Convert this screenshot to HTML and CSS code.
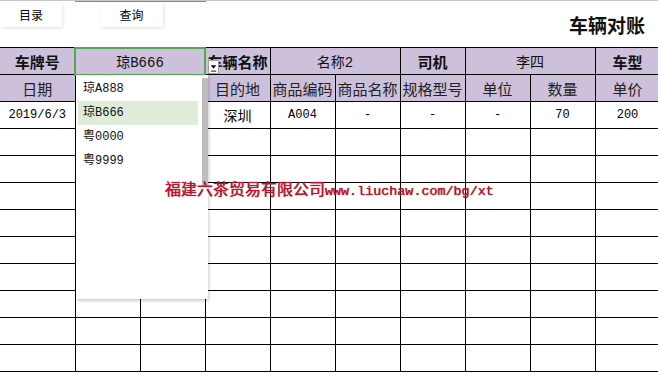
FILE: index.html
```html
<!DOCTYPE html>
<html lang="zh-CN">
<head>
<meta charset="UTF-8" />
<title>车辆对账</title>
<link rel="stylesheet" href="styles.css">
</head>
<body>
  <div class="sheet">
    <div class="topbar">
      <div class="btn btn-dir">目录</div>
      <div class="btn btn-query">查询</div>
      <h1 class="title">车辆对账</h1>
    </div>

    <table class="grid">
      <colgroup>
        <col class="c-first">
        <col class="c"><col class="c"><col class="c"><col class="c">
        <col class="c"><col class="c"><col class="c"><col class="c"><col class="c">
      </colgroup>
      <tr class="head1">
        <td class="b">车牌号</td>
        <td colspan="2" class="sel simsun">琼B666</td>
        <td class="b">车辆名称</td>
        <td colspan="2" class="simsun">名称2</td>
        <td class="b">司机</td>
        <td colspan="2">李四</td>
        <td class="b">车型</td>
      </tr>
      <tr class="head2">
        <td>日期</td><td></td><td></td><td>目的地</td><td>商品编码</td>
        <td>商品名称</td><td>规格型号</td><td>单位</td><td>数量</td><td>单价</td>
      </tr>
      <tr class="data">
        <td>2019/6/3</td><td></td><td></td><td class="cjk">深圳</td><td>A004</td>
        <td>-</td><td>-</td><td>-</td><td>70</td><td>200</td>
      </tr>
      <tr class="data"><td></td><td></td><td></td><td></td><td></td><td></td><td></td><td></td><td></td><td></td></tr>
      <tr class="data"><td></td><td></td><td></td><td></td><td></td><td></td><td></td><td></td><td></td><td></td></tr>
      <tr class="data"><td></td><td></td><td></td><td></td><td></td><td></td><td></td><td></td><td></td><td></td></tr>
      <tr class="data"><td></td><td></td><td></td><td></td><td></td><td></td><td></td><td></td><td></td><td></td></tr>
      <tr class="data"><td></td><td></td><td></td><td></td><td></td><td></td><td></td><td></td><td></td><td></td></tr>
      <tr class="data"><td></td><td></td><td></td><td></td><td></td><td></td><td></td><td></td><td></td><td></td></tr>
      <tr class="data"><td></td><td></td><td></td><td></td><td></td><td></td><td></td><td></td><td></td><td></td></tr>
      <tr class="data"><td></td><td></td><td></td><td></td><td></td><td></td><td></td><td></td><td></td><td></td></tr>
      <tr class="data"><td></td><td></td><td></td><td></td><td></td><td></td><td></td><td></td><td></td><td></td></tr>
    </table>

    <!-- dropdown button of the validated cell -->
    <div class="dd-btn">
      <svg width="10" height="13" viewBox="0 0 10 13">
        <path d="M2 4 L8 4 L5 8 Z" fill="#000"/>
        <rect x="2" y="10" width="6" height="1" fill="#000"/>
      </svg>
    </div>

    <!-- list of plate numbers -->
    <div class="dd-list">
      <ul class="dd-items">
        <li>琼A888</li>
        <li class="on">琼B666</li>
        <li>粤0000</li>
        <li>粤9999</li>
      </ul>
      <div class="dd-scroll"><div class="dd-thumb"></div></div>
    </div>

    <div class="mark"><span class="mark-cn">福建六茶贸易有限公司</span><span class="mark-url">www.liuchaw.com/bg/xt</span></div>
  </div>
</body>
</html>
```

FILE: styles.css
```css
body{
  margin: 0;
  background: #fff;
  overflow: hidden;
  font-family: "Noto Sans CJK SC", sans-serif;
}

.sheet{
  position: relative;
  width: 658px;
  height: 376px;
  overflow: hidden;
  border-top: 1px solid #c8c8c8;
  box-sizing: border-box;
}

.sheet::before{
  content: "";
  position: absolute;
  left: 75px;
  top: -1px;
  width: 131px;
  height: 2px;
  background: #5aa85a;
}

.topbar{
  height: 46px;
  display: flex;
  align-items: flex-start;
  position: relative;
}

.btn{
  margin-top: 2px;
  height: 24px;
  line-height: 24px;
  font-size: 12px;
  text-align: center;
  background: #fff;
  box-shadow: 1px 1px 3px rgba(0,0,0,0.12);
}
.btn-dir{
  width: 62px;
}
.btn-query{
  width: 63px;
  margin-left: 38px;
}

.title{
  margin: 12px 13px 0 auto;
  font-size: 19px;
  font-weight: bold;
  line-height: 24px;
  color: #111;
}

.grid{
  border-collapse: collapse;
  table-layout: fixed;
  width: 660px;
}
.c-first{
  width: 75px;
}
.c{
  width: 65px;
}
.grid td{
  border: 1px solid #000;
  padding: 0;
  height: 26px;
  text-align: center;
  overflow: hidden;
  white-space: nowrap;
}
.grid td:first-child{
  border-left: none;
}

.head1 td, .head2 td{
  background: #ccc0da;
  color: #111;
}
.head1 td{
  font-size: 14px;
}
.head1 td.b{
  font-weight: bold;
  font-size: 15px;
}
.head2 td{
  font-size: 15px;
  color: #222;
}
.head1 td.sel{
  outline: 2px solid #55a655;
  outline-offset: -1px;
}

.simsun, .data td{
  font-family: "Liberation Mono", "Noto Sans CJK SC", monospace;
  font-size: 12px;
}
.data td.cjk{
  font-family: "Noto Sans CJK SC", sans-serif;
  font-size: 14px;
}

.dd-btn{
  position: absolute;
  left: 208px;
  top: 59px;
  width: 11px;
  height: 14px;
  background: #fff;
  border: 1px solid #a0a0a0;
  box-sizing: border-box;
  display: flex;
  align-items: center;
  justify-content: center;
}

.dd-list{
  position: absolute;
  left: 76px;
  top: 74px;
  width: 132px;
  height: 224px;
  background: #fff;
  box-shadow: 1px 2px 3px rgba(0,0,0,0.2);
  display: flex;
}
.dd-items{
  list-style: none;
  margin: 2px 0 0 2px;
  padding: 0;
  width: 120px;
  font-family: "Liberation Mono", "Noto Sans CJK SC", monospace;
  font-size: 12px;
  color: #111;
}
.dd-items li{
  height: 24px;
  line-height: 24px;
  padding-left: 5px;
}
.dd-items li.on{
  background: #dfedd8;
}
.dd-scroll{
  margin: 3px 0 0 4px;
  width: 6px;
}
.dd-thumb{
  height: 108px;
  background: #bdbdbd;
}

.mark{
  position: absolute;
  left: 165px;
  top: 177px;
  color: #c8102e;
  white-space: nowrap;
  line-height: 20px;
  text-shadow: 0 0 1px #600;
}
.mark-cn{
  font-family: "Noto Sans CJK SC", sans-serif;
  font-size: 16px;
}
.mark-url{
  font-family: "Liberation Mono", monospace;
  font-size: 13.4px;
}
```
